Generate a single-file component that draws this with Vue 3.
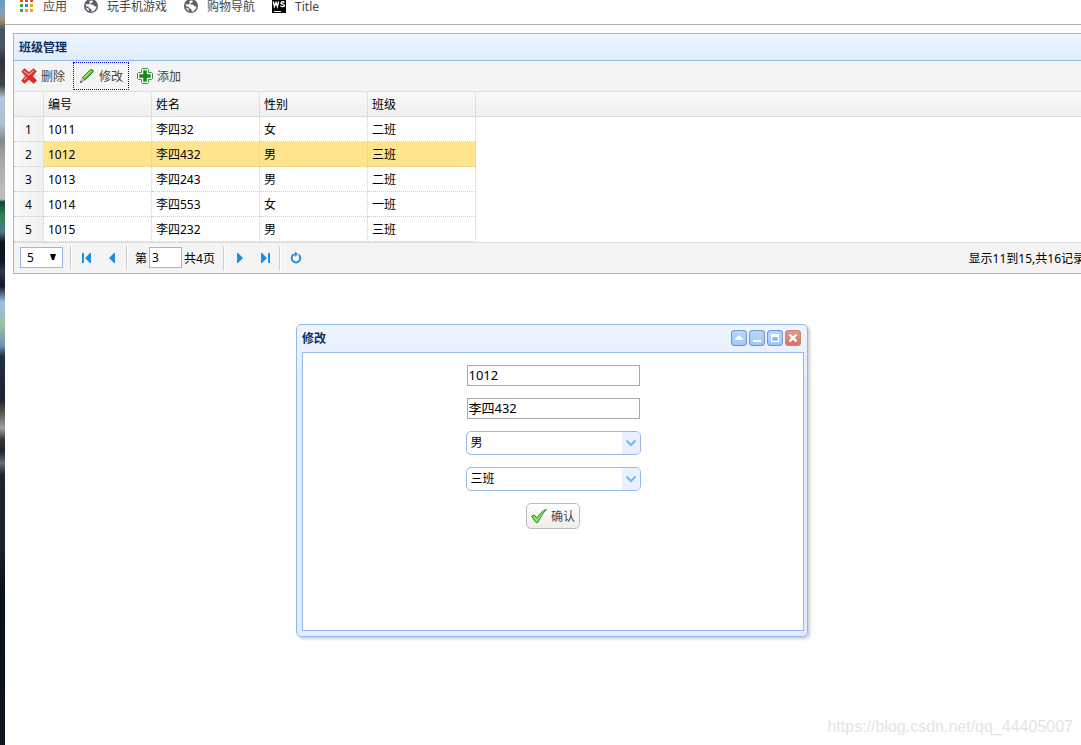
<script setup>
import { ref } from 'vue'

const rows = [
  { id: '1011', name: '李四32', sex: '女', cls: '二班' },
  { id: '1012', name: '李四432', sex: '男', cls: '三班' },
  { id: '1013', name: '李四243', sex: '男', cls: '二班' },
  { id: '1014', name: '李四553', sex: '女', cls: '一班' },
  { id: '1015', name: '李四232', sex: '男', cls: '三班' },
]
const selected = ref('1012')
const pageSize = ref('5')
const pageNo = ref('3')
const form = ref({ id: '1012', name: '李四432', sex: '男', cls: '三班' })
</script>

<template>
  <div class="screen">
    <div class="wallpaper"></div>
    <div class="page">
      <nav class="bookmarks">
        <a href="#" class="bookmark">
          <svg width="14" height="14" viewBox="0 0 14 14">
            <path fill="#ea4335" d="M0 0h3v3H0zM5 0h3v3H5zM10 0h3v3h-3z" />
            <path fill="#34a853" d="M0 5h3v3H0zM0 10h3v3H0z" />
            <path fill="#1a8cf0" d="M5 5h3v3H5z" />
            <path fill="#f5a70a" d="M10 5h3v3h-3zM5 10h3v3H5zM10 10h3v3h-3z" />
          </svg>
          <span>应用</span>
        </a>
        <a v-for="t in ['玩手机游戏', '购物导航']" :key="t" href="#" class="bookmark">
          <svg width="14" height="14" viewBox="0 0 14 14">
            <circle cx="7" cy="7" r="7" fill="#5b5f66" />
            <path fill="#fff" d="M5.500 1.800 8.400 1.600l.6 1.400-2.600 1.200.2 1.300 2.600.2 1.200 1.500 2 .2-.3 1.800-2 2.600-2.600 1.300.2-2.200-1-1.200H5.800L4.600 8 2 7l-.2-2 2.400.4 1.600-1.200z" />
            <path fill="#fff" d="m2 8.600 2.400 1 .8 2.700C3.500 11.700 2.300 10.200 2 8.600z" />
          </svg>
          <span>{{ t }}</span>
        </a>
        <a href="#" class="bookmark">
          <svg width="14" height="14" viewBox="0 0 14 14">
            <path fill="#000" d="M0 0h14v14H0z" />
            <path fill="none" stroke="#fff" stroke-width="1.400" d="m1.200 2.500 1.200 5L4 3.500l1.400 4 1.200-5M12.400 3.600C11 2.200 8.800 2.800 9 4.100c.2 1.300 3.400.8 3.400 2.300 0 1.400-2.500 1.700-3.900.4" />
            <path fill="#fff" d="M2 12h7v1H2z" />
          </svg>
          <span>Title</span>
        </a>
      </nav>

      <section class="panel">
        <h1 class="panel-title">班级管理</h1>
        <div class="toolbar">
          <button type="button" class="tool">
            <svg width="16" height="16" viewBox="0 0 16 16">
              <path fill="#e5281f" stroke="#c0403a" d="M.8 3.400 3.600.8 8 4.600 12.600.8l2.700 2.400L11.500 8l3.900 4.600-2.600 2.700L8 11.400l-4.600 3.900-2.700-2.500L4.500 8z" />
              <path fill="none" stroke="#ff9a90" stroke-width="1.300" d="m2.600 3 5.300 4L13 2.500M3 12l3-3" />
            </svg>
            <span>删除</span>
          </button>
          <button type="button" class="tool focused">
            <svg width="16" height="16" viewBox="0 0 16 16">
              <path fill="#58b62c" stroke="#287a20" d="m3.500 9.500 8-7.800c1.200-1 3.400.8 2.400 2.200L6.200 12z" />
              <path fill="none" stroke="#b5f07c" stroke-width="1.200" d="m5 9.800 7-7" />
              <path fill="#f1d9aa" stroke="#777" stroke-width=".7" d="m3.400 9.800 2.500 2.300-4.400 2.300z" />
              <path fill="#333" d="m1 15 .9-2.200L3.300 14z" />
            </svg>
            <span>修改</span>
          </button>
          <button type="button" class="tool">
            <svg width="16" height="16" viewBox="0 0 16 16">
              <path fill="#fff" stroke="#2f8a42" d="M5.500.5h5l.9.9v3.200h3.200l.9.9v5l-.9.9h-3.200v3.200l-.9.9h-5l-.9-.9v-3.200H1.400l-.9-.9v-5l.9-.9h3.200V1.400z" />
              <path fill="#168a1d" d="M6.200 2.300h3.600v3.900h3.900v3.600H9.800v3.900H6.200V9.800H2.300V6.200h3.900z" />
            </svg>
            <span>添加</span>
          </button>
        </div>

        <table class="grid">
          <colgroup>
            <col class="c-num" />
            <col v-for="n in 4" :key="n" class="c-data" />
            <col />
          </colgroup>
          <thead>
            <tr>
              <th></th>
              <th>编号</th>
              <th>姓名</th>
              <th>性别</th>
              <th>班级</th>
              <th class="rest"></th>
            </tr>
          </thead>
          <tbody>
            <tr v-for="(r, i) in rows" :key="r.id" :class="{ selected: r.id === selected }" @click="selected = r.id">
              <td class="num">{{ i + 1 }}</td>
              <td>{{ r.id }}</td>
              <td>{{ r.name }}</td>
              <td>{{ r.sex }}</td>
              <td>{{ r.cls }}</td>
              <td class="rest"></td>
            </tr>
          </tbody>
        </table>

        <div class="pager">
          <span class="size">
            <select v-model="pageSize" aria-label="每页记录数">
              <option>5</option>
              <option>10</option>
            </select>
            <svg width="6" height="6" viewBox="0 0 6 6"><path d="M0 0h6L4 6H2z" /></svg>
          </span>
          <i class="sep"></i>
          <button type="button" aria-label="首页">
            <svg width="16" height="16" viewBox="0 0 16 16"><path fill="#1a8fe3" d="M3 3h2v10H3zM12 3v10h-1L6 8l5-5z" /></svg>
          </button>
          <button type="button" aria-label="上一页">
            <svg width="16" height="16" viewBox="0 0 16 16"><path fill="#1a8fe3" d="M10 3v10H9L4 8l5-5z" /></svg>
          </button>
          <i class="sep"></i>
          <label class="page-no"><span>第</span><input v-model="pageNo" type="text" /><span>共4页</span></label>
          <i class="sep"></i>
          <button type="button" aria-label="下一页">
            <svg width="16" height="16" viewBox="0 0 16 16"><path fill="#1a8fe3" d="M5 3v10h1l5-5-5-5z" /></svg>
          </button>
          <button type="button" aria-label="末页">
            <svg width="16" height="16" viewBox="0 0 16 16"><path fill="#1a8fe3" d="M10 3h2v10h-2zM3 3v10h1l5-5-5-5z" /></svg>
          </button>
          <i class="sep"></i>
          <button type="button" aria-label="刷新">
            <svg width="16" height="16" viewBox="0 0 16 16">
              <path fill="none" stroke="#2a8fdc" stroke-width="2" d="M10.800 4.800A4.300 4.300 0 1 1 5.500 4.600" />
              <path fill="#2a8fdc" d="M7 1.500 10 4 7 7z" />
              <path fill="none" stroke="#2a8fdc" stroke-width="1.500" d="M5 5 7.500 4" />
            </svg>
          </button>
          <span class="info">显示11到15,共16记录</span>
        </div>
      </section>
    </div>

    <section class="window" role="dialog" aria-labelledby="win-title">
      <header>
        <h2 id="win-title">修改</h2>
        <button type="button" aria-label="折叠">
          <svg width="16" height="16" viewBox="0 0 16 16"><path fill="#fff" d="m8 5 4 4v1H4V9z" /></svg>
        </button>
        <button type="button" aria-label="最小化">
          <svg width="16" height="16" viewBox="0 0 16 16"><path fill="#fff" d="M4 10h8v2H4z" /></svg>
        </button>
        <button type="button" aria-label="最大化">
          <svg width="16" height="16" viewBox="0 0 16 16"><path fill="#fff" fill-rule="evenodd" d="M4 4h8v8H4zM5 7v4h6V7z" /><path fill="#7fa9dc" d="M6 7h4v3H6z" opacity=".6" /></svg>
        </button>
        <button type="button" class="close" aria-label="关闭">
          <svg width="16" height="16" viewBox="0 0 16 16"><path stroke="#fff" stroke-width="2.400" d="m4.500 4.500 7 7M11.500 4.500l-7 7" /></svg>
        </button>
      </header>
      <form @submit.prevent>
        <input v-model="form.id" type="text" aria-label="编号" />
        <input v-model="form.name" type="text" aria-label="姓名" />
        <span class="combo">
          <select v-model="form.sex" aria-label="性别">
            <option>男</option>
            <option>女</option>
          </select>
          <svg width="18" height="22" viewBox="0 0 18 22"><path fill="#e8f1ff" d="M0 0h18v22H0z" /><path fill="none" stroke="#74b9ee" stroke-width="2" d="m4.500 8.500 4.500 4.500 4.500-4.500" /></svg>
        </span>
        <span class="combo">
          <select v-model="form.cls" aria-label="班级">
            <option>一班</option>
            <option>二班</option>
            <option>三班</option>
          </select>
          <svg width="18" height="22" viewBox="0 0 18 22"><path fill="#e8f1ff" d="M0 0h18v22H0z" /><path fill="none" stroke="#74b9ee" stroke-width="2" d="m4.500 8.500 4.500 4.500 4.500-4.500" /></svg>
        </span>
        <button type="submit" class="ok">
          <svg width="16" height="16" viewBox="0 0 16 16"><path fill="#8be05e" stroke="#2c8c2c" stroke-linejoin="round" d="m.6 8.200 2.600-1.300 2.600 3.100C8.300 6 11 3.200 15.400 1.200c-3.200 3.600-6 7.900-8.600 13.200L5 14.600z" /></svg>
          <span>确认</span>
        </button>
      </form>
    </section>

    <div class="watermark">https://blog.csdn.net/qq_44405007</div>
  </div>
</template>

<style>
body {
  background: #fff;
  overflow: hidden;
}
</style>

<style scoped>
.screen {
  position: relative;
  display: flex;
  min-height: 100vh;
  overflow: hidden;
  font: 12px/16px "Noto Sans", "Noto Sans CJK SC", sans-serif;
  color: #000;
}
.screen * {
  box-sizing: border-box;
}
svg {
  display: block;
  flex: none;
}
button,
input,
select {
  font: inherit;
  color: inherit;
  margin: 0;
  outline: none;
}
.wallpaper {
  flex: none;
  width: 5px;
  background: linear-gradient(#6a9bc8 0, #7fa0bd 12px, #a58f76 20px, #47535b 30px, #4a5560 48px, #30343a 60px, #40454a 85px, #b0c8dc 98px, #a9bfd2 125px, #85898c 140px, #a8a8a8 160px, #c0c0c0 199px, #14432c 202px, #2f8552 216px, #50788a 232px, #10151f 242px, #10151f 260px, #2a3850 272px, #101825 286px, #9dbfe2 302px, #9dc0a0 325px, #7090b0 346px, #203040 356px, #1c2230 400px, #55534f 412px, #a0a09e 428px, #303438 440px, #202830 452px, #607080 463px, #1e2428 475px, #1a2024 550px, #0a0f14 600px, #10161c 745px);
}
.page {
  flex: 1;
  min-width: 0;
}
.bookmarks {
  display: flex;
  gap: 17px;
  height: 25px;
  padding: 0 15px;
  border-bottom: 1px solid #b0b0b0;
}
.bookmark {
  display: flex;
  align-items: flex-start;
  gap: 9px;
  height: 16px;
  margin-top: -1px;
  color: #454545;
  text-decoration: none;
}
.panel {
  margin: 8px -16px 0 8px;
  border: 1px solid #95b8e7;
}
.panel-title {
  margin: 0;
  padding: 6px 5px 4px;
  border-bottom: 1px solid #95b8e7;
  background: linear-gradient(#eff5ff, #e0ecff);
  color: #0e2d5f;
  font-size: 12px;
  line-height: 16px;
}
.toolbar {
  display: flex;
  align-items: center;
  gap: 2px;
  height: 31px;
  padding-left: 1px;
  border-bottom: 1px solid #ddd;
  background: #f4f4f4;
}
.tool {
  display: flex;
  align-items: center;
  gap: 4px;
  height: 28px;
  padding: 0 5px;
  border: 1px solid transparent;
  background: none;
  color: #444;
}
.tool span,
.ok span,
.pager label span,
.info {
  padding-top: 2px;
}
.tool.focused {
  border: 1px dotted #0000e0;
}
.grid {
  width: 100%;
  table-layout: fixed;
  border-collapse: separate;
  border-spacing: 0;
}
.c-num {
  width: 30px;
}
.c-data {
  width: 108px;
}
.grid th,
.grid td {
  height: 25px;
  padding: 2px 4px 0;
  border-right: 1px dotted #ccc;
  border-bottom: 1px dotted #ccc;
  font-weight: normal;
  text-align: left;
}
.grid thead {
  background: linear-gradient(#f9f9f9, #efefef);
}
.grid th {
  border-bottom: 1px solid #ddd;
}
.grid td.num {
  padding: 2px 0 0;
  text-align: center;
  background: linear-gradient(90deg, #fafafa, #efefef);
}
.grid .rest {
  border-right: 0;
}
.grid td.rest {
  border-bottom: 0;
}
.selected td:not(.num):not(.rest) {
  background: #ffe48d;
}
.pager {
  display: flex;
  align-items: center;
  height: 31px;
  padding: 0 11px 0 6px;
  border-top: 1px solid #ddd;
  background: #f4f4f4;
}
.pager button {
  padding: 5px;
  border: 0;
  background: none;
}
.size {
  position: relative;
  margin: 0 7px 1px 0;
}
.size select {
  display: block;
  width: 43px;
  height: 21px;
  padding: 0 6px;
  border: 1px solid #95b8e7;
  border-radius: 0;
  background: #fff;
  appearance: none;
}
.size svg {
  position: absolute;
  right: 7px;
  top: 7px;
  pointer-events: none;
}
.sep {
  width: 2px;
  height: 24px;
  margin-right: 2px;
  border-left: 1px solid #ccc;
  border-right: 1px solid #fff;
}
.page-no {
  display: flex;
  align-items: center;
  padding: 0 8px 0 5px;
}
.page-no input {
  width: 33px;
  height: 21px;
  margin: 0 2px 1px;
  padding: 0 2px;
  border: 1px solid #95b8e7;
}
.info {
  margin-left: auto;
  white-space: nowrap;
}
.window {
  position: absolute;
  left: 296px;
  top: 324px;
  width: 512px;
  padding: 5px 3px 5px 5px;
  border: 1px solid #95b8e7;
  border-radius: 5px;
  background: linear-gradient(#eff5ff, #e0ecff 20%);
  box-shadow: 2px 2px 3px #ccc;
}
.window header {
  display: flex;
  gap: 2px;
  height: 22px;
  padding-right: 3px;
}
.window h2 {
  flex: 1;
  margin: 0;
  padding-top: 1px;
  color: #0e2d5f;
  font-size: 12px;
  line-height: 16px;
}
.window header button {
  width: 16px;
  height: 16px;
  padding: 0;
  border: 0;
  border-radius: 4px;
  background: linear-gradient(#b9d8fb, #9fc7f5);
  box-shadow: inset 0 0 0 1px #7399cc;
}
.window header .close {
  background: linear-gradient(#dda08c, #d3715a);
  box-shadow: inset 0 0 0 1px #c98672;
}
.window form {
  display: flex;
  flex-direction: column;
  align-items: center;
  gap: 12px;
  min-height: 279px;
  padding-top: 12px;
  border: 1px solid #95b8e7;
  background: #fff;
}
.window form input {
  width: 173px;
  height: 21px;
  padding: 0 1px 2px;
  border: 1px solid #a9a9a9;
  font-size: 13px;
}
.combo {
  position: relative;
  width: 175px;
}
.combo select {
  display: block;
  width: 100%;
  height: 24px;
  padding: 0 20px 0 4px;
  border: 1px solid #95b8e7;
  border-radius: 5px;
  background: #fff;
  appearance: none;
}
.combo svg {
  position: absolute;
  right: 1px;
  top: 1px;
  border-radius: 0 4px 4px 0;
  pointer-events: none;
}
.ok {
  display: flex;
  align-items: center;
  gap: 4px;
  height: 26px;
  padding: 0 4px;
  border: 1px solid #bbb;
  border-radius: 5px;
  background: linear-gradient(#fff, #eee);
  color: #444;
}
.watermark {
  position: absolute;
  right: 8px;
  bottom: 8px;
  color: #e4e4e4;
  font: 16px/20px "Liberation Sans", Arial, sans-serif;
}
</style>
